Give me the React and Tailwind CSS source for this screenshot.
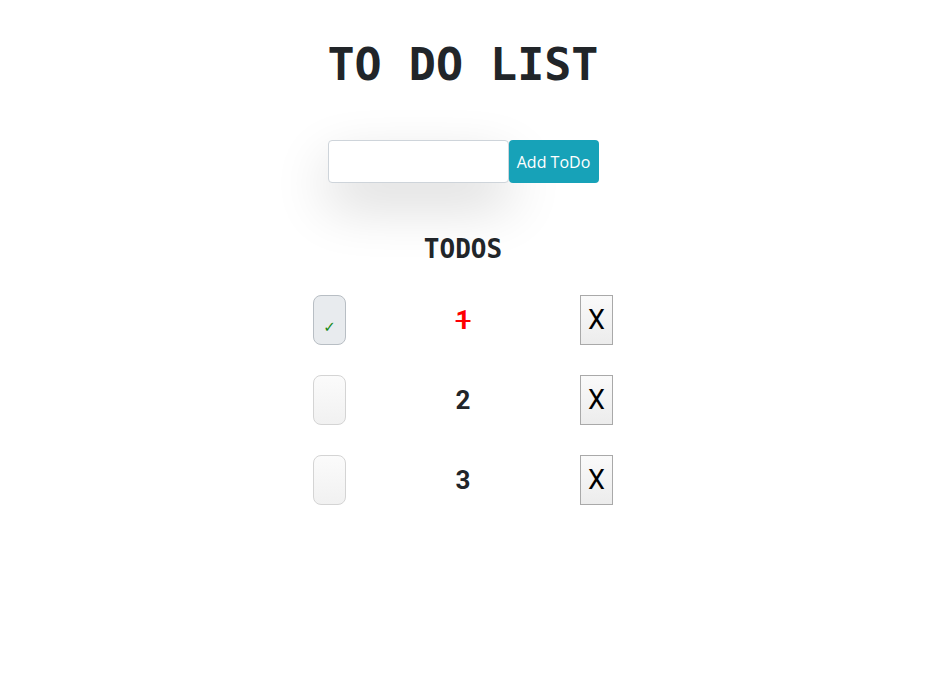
import { useState } from 'react';

export default function App() {
  const [text, setText] = useState('');
  const [todos, setTodos] = useState([
    { id: 1, title: '1', done: true },
    { id: 2, title: '2', done: false },
    { id: 3, title: '3', done: false },
  ]);

  const addTodo = () => {
    if (text.trim() === '') return;
    setTodos([...todos, { id: Date.now(), title: text.trim(), done: false }]);
    setText('');
  };

  const toggle = (id) => {
    setTodos(todos.map((t) => (t.id === id ? { ...t, done: !t.done } : t)));
  };

  const remove = (id) => {
    setTodos(todos.filter((t) => t.id !== id));
  };

  return (
    <div className="min-h-screen bg-white">
      <div className="w-[926px] flex flex-col items-center">
        {/* Title */}
        <h1 className="mt-[38px] text-[45px] leading-[54px] font-bold text-[#212529] font-['DejaVu_Sans_Mono',monospace]">
          TO DO LIST
        </h1>

        {/* Form */}
        <div className="mt-12 flex">
          <input
            type="text"
            value={text}
            onChange={(e) => setText(e.target.value)}
            onKeyDown={(e) => e.key === 'Enter' && addTodo()}
            className="w-[181px] h-[43px] px-3 bg-white border border-[#ced4da] rounded-[4px] shadow-[0_22px_55px_rgba(0,0,0,0.16)] focus:outline-none"
          />
          <button
            onClick={addTodo}
            className="w-[90px] h-[43px] bg-[#17a2b8] text-white rounded-[4px] text-[16px] font-['Open_Sans',sans-serif]"
          >
            Add ToDo
          </button>
        </div>

        {/* List */}
        <h2 className="mt-[51px] text-[26px] leading-[30px] font-bold text-[#212529] font-['DejaVu_Sans_Mono',monospace]">
          TODOS
        </h2>

        <div className="mt-[31px] w-[300px] flex flex-col gap-[30px]">
          {todos.map((todo) => (
            <div key={todo.id} className="flex items-center h-[50px]">
              <button
                onClick={() => toggle(todo.id)}
                className={`w-[33px] h-[50px] rounded-[8px] border flex items-end justify-center pb-[9px] ${
                  todo.done
                    ? 'bg-[#e8ebee] border-[#b8bec4]'
                    : 'bg-gradient-to-b from-[#fbfbfb] to-[#f1f1f1] border-[#d4d4d4]'
                }`}
              >
                {todo.done && (
                  <span className="text-[15px] leading-none font-bold text-[#168a16] font-['DejaVu_Sans',sans-serif]">✓</span>
                )}
              </button>
              <div
                className={`flex-1 text-center text-[26px] font-bold font-['Roboto',sans-serif] ${
                  todo.done ? 'text-[#ff0000] line-through' : 'text-[#212529]'
                }`}
              >
                {todo.title}
              </div>
              <button
                onClick={() => remove(todo.id)}
                className="w-[33px] h-[50px] border border-[#a9a9a9] bg-gradient-to-b from-[#fafafa] to-[#ececec] text-[27px] text-black font-['Roboto',sans-serif] flex items-center justify-center"
              >
                X
              </button>
            </div>
          ))}
        </div>
      </div>
    </div>
  );
}
